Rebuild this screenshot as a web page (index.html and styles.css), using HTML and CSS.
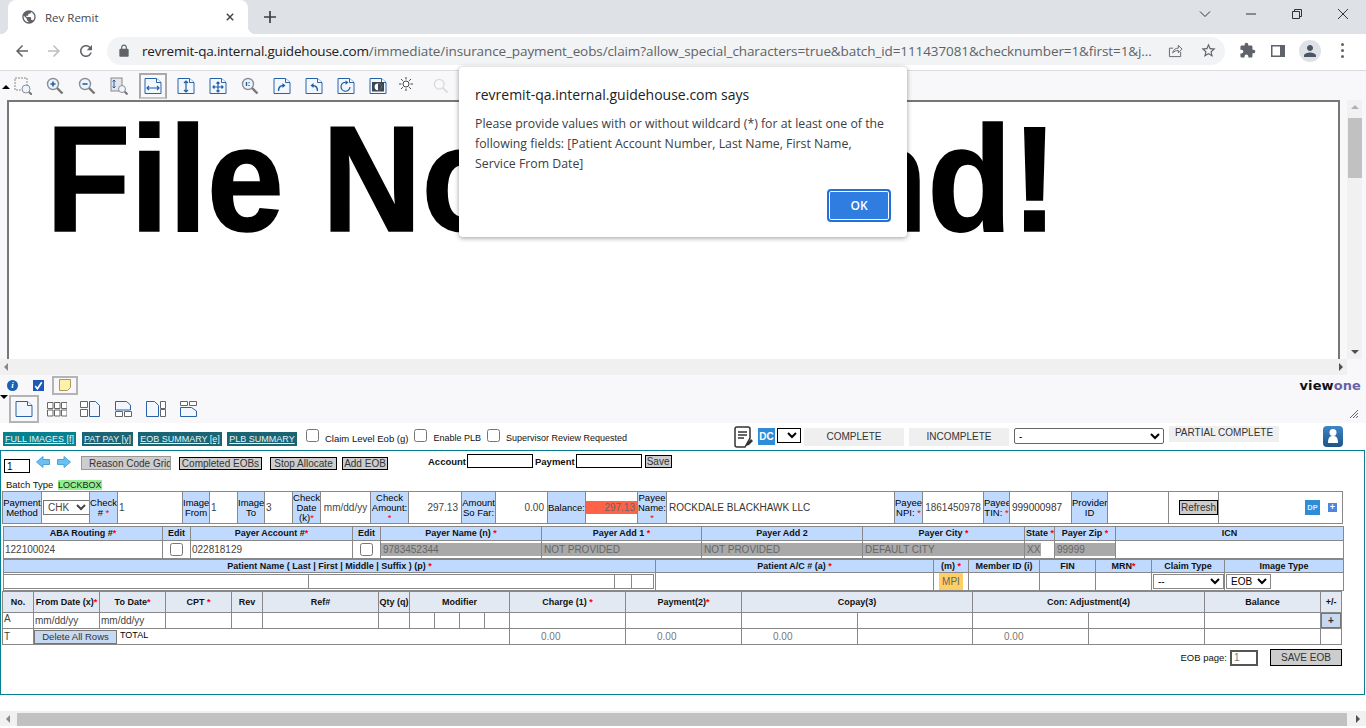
FILE: index.html

```html
<!DOCTYPE html>
<html lang="en">
<head>
  <meta charset="UTF-8" />
  <title>Rev Remit</title>
  <link rel="stylesheet" href="styles.css">
</head>
<body>
<svg class="defs" width="0" height="0">
  <defs>
    <symbol id="page" viewBox="0 0 18 18">
      <path d="M1 1.5h11.5l4.5 4v11H1z" fill="#f2f6fd" stroke="#2a62a8"/>
      <path d="M12.5 1.5v4h4.5" fill="#fff" stroke="#2a62a8"/>
    </symbol>
    <symbol id="lens" viewBox="0 0 18 18">
      <circle cx="7" cy="7" r="5.5" fill="#eef4fb" stroke="#8a9099" stroke-width="1.4"/>
      <path d="M11 11l5.5 5.5" stroke="#777" stroke-width="2.4"/>
    </symbol>
  </defs>
</svg>

<div class="page">
  <div class="tabstrip">
    <div class="tab">
      <svg class="favicon" viewBox="0 0 24 24"><path d="M12 2C6.48 2 2 6.48 2 12s4.48 10 10 10 10-4.48 10-10S17.52 2 12 2zm-1 17.93c-3.95-.49-7-3.85-7-7.93 0-.62.08-1.21.21-1.79L9 15v1c0 1.1.9 2 2 2v1.93zm6.9-2.54c-.26-.81-1-1.39-1.9-1.39h-1v-3c0-.55-.45-1-1-1H8v-2h2c.55 0 1-.45 1-1V7h2c1.1 0 2-.9 2-2v-.41c2.93 1.19 5 4.06 5 7.41 0 2.08-.8 3.97-2.1 5.39z"/></svg>
      <span class="tab-title">Rev Remit</span>
      <svg class="tab-close" viewBox="0 0 10 10"><path d="M1 1l8 8M9 1l-8 8"/></svg>
    </div>
    <svg class="new-tab" viewBox="0 0 12 12"><path d="M6 0v12M0 6h12"/></svg>
    <div class="window-controls">
      <svg viewBox="0 0 12 12" class="win-chevron"><path d="M1 3.5l5 5 5-5"/></svg>
      <svg viewBox="0 0 12 12" class="win-min"><path d="M1 6h10"/></svg>
      <svg viewBox="0 0 12 12" class="win-restore"><path d="M1.5 3.5h7v7h-7zM3.5 3.5v-2h7v7h-2"/></svg>
      <svg viewBox="0 0 12 12" class="win-close"><path d="M1 1l10 10M11 1l-10 10"/></svg>
    </div>
  </div>

  <div class="navbar">
    <svg class="nav-icon" viewBox="0 0 24 24"><path d="M20 11H7.83l5.59-5.59L12 4l-8 8 8 8 1.41-1.41L7.83 13H20v-2z"/></svg>
    <svg class="nav-icon nav-off" viewBox="0 0 24 24"><path d="M12 4l-1.41 1.41L16.17 11H4v2h12.17l-5.58 5.59L12 20l8-8z"/></svg>
    <svg class="nav-icon" viewBox="0 0 24 24"><path d="M17.65 6.35C16.2 4.9 14.21 4 12 4c-4.42 0-7.99 3.58-7.99 8s3.57 8 7.99 8c3.73 0 6.84-2.55 7.73-6h-2.08c-.82 2.33-3.04 4-5.65 4-3.31 0-6-2.69-6-6s2.69-6 6-6c1.66 0 3.14.69 4.22 1.78L13 11h7V4l-2.35 2.35z"/></svg>
    <div class="omnibox">
      <svg class="lock" viewBox="0 0 24 24"><path d="M18 8h-1V6c0-2.76-2.24-5-5-5S7 3.24 7 6v2H6c-1.1 0-2 .9-2 2v10c0 1.1.9 2 2 2h12c1.1 0 2-.9 2-2V10c0-1.1-.9-2-2-2zM9 6c0-1.66 1.34-3 3-3s3 1.34 3 3v2H9V6z"/></svg>
      <span class="url"><b>revremit-qa.internal.guidehouse.com</b>/immediate/insurance_payment_eobs/claim?allow_special_characters=true&amp;batch_id=111437081&amp;checknumber=1&amp;first=1&amp;j...</span>
      <svg class="omni-share" viewBox="0 0 16 16"><path d="M13.5 9.5v5h-12v-9h4M5 10.5c.6-3.4 3-5 6-5V2.5l4 4-4 4V8c-2.500 0-4.500.7-6 2.500z"/></svg>
      <svg class="omni-star" viewBox="0 0 24 24"><path d="M22 9.24l-7.19-.62L12 2 9.19 8.63 2 9.24l5.46 4.73L5.82 21 12 17.27 18.18 21l-1.630-7.030L22 9.240zM12 15.400l-3.760 2.270 1-4.280-3.320-2.880 4.380-.38L12 6.100l1.710 4.040 4.380.38-3.320 2.880 1 4.280L12 15.400z"/></svg>
    </div>
    <svg class="ext-icon" viewBox="0 0 24 24"><path d="M20.500 11H19V7c0-1.100-.9-2-2-2h-4V3.500C13 2.120 11.880 1 10.500 1S8 2.120 8 3.500V5H4c-1.100 0-1.990.9-1.990 2v3.800H3.500c1.490 0 2.700 1.210 2.700 2.700s-1.210 2.700-2.700 2.700H2V20c0 1.100.9 2 2 2h3.800v-1.500c0-1.490 1.210-2.700 2.700-2.700 1.490 0 2.700 1.210 2.700 2.700V22H17c1.100 0 2-.9 2-2v-4h1.500c1.380 0 2.500-1.120 2.500-2.500S21.880 11 20.500 11z"/></svg>
    <svg class="side-icon" viewBox="0 0 14 14"><path d="M0 1h14v12H0zM1.500 2.500v9H9v-9z" fill-rule="evenodd"/></svg>
    <div class="avatar"><svg viewBox="0 0 24 24"><path d="M12 12c2.210 0 4-1.790 4-4s-1.790-4-4-4-4 1.790-4 4 1.790 4 4 4zm0 2c-2.670 0-8 1.340-8 4v2h16v-2c0-2.660-5.330-4-8-4z"/></svg></div>
    <div class="kebab"><i></i><i></i><i></i></div>
  </div>

  <div class="viewer">
    <div class="viewer-tools">
      <span class="caret-up"></span>
      <svg class="vt vt-first" viewBox="0 0 18 18"><rect x="1" y="1" width="12" height="12" fill="none" stroke="#888" stroke-dasharray="2 1"/><circle cx="12" cy="12" r="4" fill="#eef4fb" stroke="#8a9099"/><path d="M15 15l3 3" stroke="#777" stroke-width="2"/></svg>
      <svg class="vt" viewBox="0 0 18 18"><use href="#lens"/><path d="M4.500 7h5M7 4.500v5" stroke="#1f5fa8" stroke-width="1.600"/></svg>
      <svg class="vt" viewBox="0 0 18 18"><use href="#lens"/><path d="M4.500 7h5" stroke="#1f5fa8" stroke-width="1.600"/></svg>
      <svg class="vt" viewBox="0 0 18 18"><rect x="1" y="1" width="11" height="13" fill="#e4e6ea" stroke="#888"/><path d="M4 3v8M2.500 4.500L4 3l1.500 1.500M2.500 9.500L4 11l1.500-1.500" fill="none" stroke="#1f5fa8"/><circle cx="12" cy="12" r="3.500" fill="#eef4fb" stroke="#8a9099"/><path d="M14.500 14.500l3 3" stroke="#777" stroke-width="2"/></svg>
      <span class="vt-selected"><svg class="vt" viewBox="0 0 18 18"><use href="#page"/><path d="M3 11h12M5 9l-2 2 2 2M13 9l2 2-2 2" fill="none" stroke="#1f5fa8" stroke-width="1.200"/></svg></span>
      <svg class="vt" viewBox="0 0 18 18"><use href="#page"/><path d="M9 4v11M7 6l2-2 2 2M7 13l2 2 2-2" fill="none" stroke="#1f5fa8" stroke-width="1.200"/></svg>
      <svg class="vt" viewBox="0 0 18 18"><use href="#page"/><path d="M9 5v10M4 10h10M7.500 6.500L9 5l1.500 1.500M7.500 13.500L9 15l1.500-1.500M5.500 8.500L4 10l1.500 1.500M12.500 8.500L14 10l-1.500 1.500" fill="none" stroke="#1f5fa8" stroke-width="1.200"/></svg>
      <svg class="vt" viewBox="0 0 18 18"><use href="#lens"/><path d="M5.500 5v4" stroke="#1f5fa8" stroke-width="1.400" fill="none"/><path d="M8 5.200v1M8 8v1" stroke="#1f5fa8" stroke-width="1.400"/></svg>
      <svg class="vt" viewBox="0 0 18 18"><use href="#page"/><path d="M5.500 14c0-4 2-5.500 5-5.500" fill="none" stroke="#1f5fa8" stroke-width="1.400"/><path d="M9.500 6l3 2.500-3 2.500z" fill="#1f5fa8"/></svg>
      <svg class="vt" viewBox="0 0 18 18"><use href="#page"/><path d="M12.500 14c0-4-2-5.500-5-5.500" fill="none" stroke="#1f5fa8" stroke-width="1.400"/><path d="M8.500 6l-3 2.500 3 2.500z" fill="#1f5fa8"/></svg>
      <svg class="vt" viewBox="0 0 18 18"><use href="#page"/><path d="M10 5.500a4.500 4.500 0 1 0 3 4.500" fill="none" stroke="#1f5fa8" stroke-width="1.200"/><path d="M8.500 3.500l3 2-3 2.200z" fill="#1f5fa8"/></svg>
      <svg class="vt" viewBox="0 0 18 18"><use href="#page"/><rect x="3" y="5" width="12" height="9.500" fill="#3a4654"/><circle cx="9" cy="9.800" r="3.400" fill="#fff"/><path d="M9 6.400a3.400 3.400 0 0 1 0 6.800z" fill="#3a4654"/></svg>
      <svg class="vt-sun" viewBox="0 0 14 14"><circle cx="7" cy="7" r="3" fill="#fff" stroke="#444"/><path d="M7 0v2.500M7 11.500V14M0 7h2.500M11.500 7H14M2 2l1.800 1.800M10.200 10.200L12 12M12 2l-1.800 1.800M3.800 10.200L2 12" stroke="#444"/></svg>
      <svg class="vt-search" viewBox="0 0 18 18"><circle cx="7" cy="7" r="5.500" fill="none" stroke="#d9dadd" stroke-width="1.400"/><path d="M11 11l5.500 5.500" stroke="#d9dadd" stroke-width="2"/></svg>
    </div>

    <div class="viewer-main">
      <div class="doc-frame">
        <div class="doc-text">File Not Found!</div>
      </div>
      <div class="vscroll">
        <span class="arrow-up"></span>
        <span class="vthumb"></span>
        <span class="arrow-down"></span>
      </div>
    </div>

    <div class="hbar">
      <span class="arrow-left"></span>
      <span class="arrow-right"></span>
    </div>

    <div class="viewer-bottom">
      <div class="vb-row">
        <span class="info-dot">i</span>
        <span class="check-blue"><svg viewBox="0 0 10 10"><path d="M2 5.500l2 2.500 4-6" fill="none" stroke="#fff" stroke-width="1.500"/></svg></span>
        <span class="note-btn"><svg viewBox="0 0 12 12"><path d="M.5.500h11v8l-3 3h-8z" fill="#fdf0a8" stroke="#a89a5c"/></svg></span>
        <span class="logo"><span>view</span><span class="logo-one">one</span></span>
      </div>
      <div class="vb-row vb-pages">
        <span class="caret-down"></span>
        <span class="vb-selected"><svg class="vb-page" viewBox="0 0 18 18"><use href="#page"/></svg></span>
        <svg class="vb-layout" viewBox="0 0 20 16"><path d="M.5 1.500h5.500v6H.5zM7.500 1.500H13v6H7.500zM14.500 1.500H20v6h-5.500zM.5 9h5.500v6H.5zM7.500 9H13v6H7.500zM14.500 9H20v6h-5.500z" fill="#fff" stroke="#666"/></svg>
        <svg class="vb-layout" viewBox="0 0 20 16"><path d="M.5.500h7v6h-7zM.5 8.500h7v7h-7z" fill="#fff" stroke="#666"/><path d="M9.500.500h6l4 4v11h-10z" fill="#f2f6fd" stroke="#2a62a8"/></svg>
        <svg class="vb-layout" viewBox="0 0 20 16"><path d="M2.500.500h11l4 3.500v5h-15z" fill="#f2f6fd" stroke="#2a62a8"/><path d="M2.500 10.500h7v5h-7zM11.500 10.500h7v5h-7z" fill="#fff" stroke="#666"/></svg>
        <svg class="vb-layout" viewBox="0 0 20 16"><path d="M.5.500h8l4 4v11h-12z" fill="#f2f6fd" stroke="#2a62a8"/><path d="M14.500.500h5v7h-5zM14.500 8.500h5v7h-5z" fill="#fff" stroke="#666"/></svg>
        <svg class="vb-layout" viewBox="0 0 20 16"><path d="M1.500.500h7v4h-7zM10.500.500h7v4h-7z" fill="#fff" stroke="#666"/><path d="M1.500 6.500h11l5 3.500v5.500h-16z" fill="#f2f6fd" stroke="#2a62a8"/></svg>
        <svg class="grip" viewBox="0 0 8 8"><path d="M0 8l8-8M3 8l5-5M6 8l2-2" stroke="#666"/></svg>
      </div>
    </div>
  </div>

  <div class="claim-head">
    <a class="teal-tab tab-full">FULL IMAGES [f]</a>
    <a class="teal-tab tab-pat">PAT PAY [y]</a>
    <a class="teal-tab tab-eob">EOB SUMMARY [e]</a>
    <a class="teal-tab tab-plb">PLB SUMMARY</a>
    <label class="check-label lb-claim"><input type="checkbox">Claim Level Eob (g)</label>
    <label class="check-label lb-plb"><input type="checkbox">Enable PLB</label>
    <label class="check-label lb-super"><input type="checkbox">Supervisor Review Requested</label>
    <svg class="doc-pen" viewBox="0 0 20 22"><path d="M4 1h11a2 2 0 0 1 2 2v9l-5 9H4a2 2 0 0 1-2-2V3a2 2 0 0 1 2-2z" fill="#fff" stroke="#333" stroke-width="1.500"/><path d="M5 6h9M5 9h9M5 12h6" stroke="#333" stroke-width="1.500"/><path d="M13 20l1-3 4-4 2 2-4 4z" fill="#333"/></svg>
    <span class="dc-btn">DC</span>
    <select class="dc-select"><option></option></select>
    <span class="status-btn st-complete">COMPLETE</span>
    <span class="status-btn st-incomplete">INCOMPLETE</span>
    <select class="status-select"><option>-</option></select>
    <span class="status-btn st-partial">PARTIAL COMPLETE</span>
    <span class="user-btn"><svg viewBox="0 0 20 20"><circle cx="10" cy="6.500" r="3.500" fill="#fff"/><path d="M5 17c0-6 2-7 5-7s5 1 5 7z" fill="#fff"/></svg></span>
  </div>

  <div class="claim-frame">
    <div class="action-row">
      <input class="mini-input page-no" value="1">
      <svg class="nav-arrow" viewBox="0 0 14 12"><path d="M.5 6L7 .5v3h6.500v5H7v3z" fill="#6cc0f0" stroke="#4aa3dc"/></svg>
      <svg class="nav-arrow nav-next" viewBox="0 0 14 12"><path d="M13.500 6L7 .5v3H.5v5H7v3z" fill="#6cc0f0" stroke="#4aa3dc"/></svg>
      <span class="btn btn-grid"><span>Reason Code Grid</span></span>
      <span class="btn btn-completed">Completed EOBs</span>
      <span class="btn btn-stop">Stop Allocate</span>
      <span class="btn btn-add">Add EOB</span>
      <b class="inline-label label-account">Account</b>
      <input class="mini-input acct-input">
      <b class="inline-label label-payment">Payment</b>
      <input class="mini-input acct-input">
      <span class="btn btn-save">Save</span>
    </div>
    <div class="batch-row">Batch Type <span class="lockbox">LOCKBOX</span></div>

    <table class="grid grid-check">
      <colgroup>
        <col width="39"><col width="48"><col width="28"><col width="65"><col width="27"><col width="28"><col width="27"><col width="28"><col width="28"><col width="50"><col width="38"><col width="53"><col width="34"><col width="52"><col width="38"><col width="52"><col width="29"><col width="228"><col width="28"><col width="61"><col width="26"><col width="62"><col width="36"><col width="61"><col width="50"><col width="124">
      </colgroup>
      <tr>
        <th>Payment Method</th>
        <td class="center"><select class="sel-chk"><option>CHK</option></select></td>
        <th>Check # <em>*</em></th>
        <td>1</td>
        <th>Image From</th>
        <td>1</td>
        <th>Image To</th>
        <td>3</td>
        <th>Check Date (k)<em>*</em></th>
        <td class="center">mm/dd/yy</td>
        <th>Check Amount: <em>*</em></th>
        <td class="right">297.13</td>
        <th>Amount So Far:</th>
        <td class="right">0.00</td>
        <th>Balance:</th>
        <td class="balance-cell"><span class="balance">297.13</span></td>
        <th>Payee Name: <em>*</em></th>
        <td class="payee">ROCKDALE BLACKHAWK LLC</td>
        <th>Payee NPI: <em>*</em></th>
        <td class="center">1861450978</td>
        <th>Payee TIN: <em>*</em></th>
        <td class="payee">999000987</td>
        <th>Provider ID</th>
        <td></td>
        <td class="refresh-cell"><span class="btn btn-refresh">Refresh</span></td>
        <td class="right dp-cell"><span class="dp-btn">DP</span><span class="plus-btn">+</span></td>
      </tr>
    </table>

    <table class="grid grid-payer">
      <colgroup>
        <col width="159"><col width="28"><col width="162"><col width="28"><col width="161"><col width="160"><col width="161"><col width="162"><col width="30"><col width="61"><col width="228">
      </colgroup>
      <tr>
        <th>ABA Routing #<em>*</em></th>
        <th>Edit</th>
        <th>Payer Account #<em>*</em></th>
        <th>Edit</th>
        <th>Payer Name (n) <em>*</em></th>
        <th>Payer Add 1 <em>*</em></th>
        <th>Payer Add 2</th>
        <th>Payer City <em>*</em></th>
        <th>State <em>*</em></th>
        <th>Payer Zip <em>*</em></th>
        <th>ICN</th>
      </tr>
      <tr class="tall">
        <td>122100024</td>
        <td class="center"><input type="checkbox"></td>
        <td>022818129</td>
        <td class="center"><input type="checkbox"></td>
        <td class="lock-cell"><span class="locked">9783452344</span></td>
        <td class="lock-cell"><span class="locked">NOT PROVIDED</span></td>
        <td class="lock-cell"><span class="locked">NOT PROVIDED</span></td>
        <td class="lock-cell"><span class="locked">DEFAULT CITY</span></td>
        <td class="lock-cell"><span class="locked locked-short">XX</span></td>
        <td class="lock-cell"><span class="locked">99999</span></td>
        <td></td>
      </tr>
    </table>

    <table class="grid grid-patient">
      <colgroup>
        <col width="652"><col width="278"><col width="35"><col width="71"><col width="56"><col width="56"><col width="73"><col width="119">
      </colgroup>
      <tr>
        <th>Patient Name ( Last | First | Middle | Suffix ) (p) <em>*</em></th>
        <th>Patient A/C # (a) <em>*</em></th>
        <th>(m) <em>*</em></th>
        <th>Member ID (i)</th>
        <th>FIN</th>
        <th>MRN<em>*</em></th>
        <th>Claim Type</th>
        <th>Image Type</th>
      </tr>
      <tr class="tall">
        <td class="name-cell">
          <div class="name-inputs"><span class="name-a"></span><span class="name-b"></span><span class="name-c"></span><span class="name-d"></span></div>
        </td>
        <td></td>
        <td class="mpi-cell"><span class="mpi">MPI</span></td>
        <td></td>
        <td></td>
        <td></td>
        <td class="center"><select class="sel-claim"><option>--</option></select></td>
        <td><select class="sel-image"><option>EOB</option></select></td>
      </tr>
    </table>

    <table class="grid grid-lines">
      <colgroup>
        <col width="31"><col width="66"><col width="66"><col width="66"><col width="31"><col width="116"><col width="31"><col width="25"><col width="25"><col width="25"><col width="25"><col width="116"><col width="116"><col width="116"><col width="115"><col width="116"><col width="116"><col width="116"><col width="21">
      </colgroup>
      <tr class="head">
        <th>No.</th>
        <th>From Date (x)<em>*</em></th>
        <th>To Date<em>*</em></th>
        <th>CPT <em>*</em></th>
        <th>Rev</th>
        <th>Ref#</th>
        <th>Qty (q)</th>
        <th colspan="4">Modifier</th>
        <th>Charge (1) <em>*</em></th>
        <th>Payment(2)<em>*</em></th>
        <th colspan="2">Copay(3)</th>
        <th colspan="2">Con: Adjustment(4)</th>
        <th>Balance</th>
        <th>+/-</th>
      </tr>
      <tr class="line">
        <td class="top">A</td>
        <td>mm/dd/yy</td>
        <td>mm/dd/yy</td>
        <td></td><td></td><td></td><td></td><td></td><td></td><td></td><td></td>
        <td></td><td></td><td></td><td></td><td></td><td></td><td></td>
        <td class="add-cell"><span class="add-btn">+</span></td>
      </tr>
      <tr class="line">
        <td>T</td>
        <td colspan="10" class="total-cell"><span class="btn-delete">Delete All Rows</span><span class="total-label">TOTAL</span></td>
        <td class="zero">0.00</td>
        <td class="zero">0.00</td>
        <td class="zero">0.00</td>
        <td></td>
        <td class="zero">0.00</td>
        <td></td><td></td><td></td>
      </tr>
    </table>

    <div class="eob-foot">
      <span class="eob-label">EOB page:</span>
      <input class="eob-input" value="1">
      <span class="btn btn-saveeob">SAVE EOB</span>
    </div>
  </div>

  <div class="page-hbar">
    <span class="arrow-left"></span>
    <span class="page-thumb"></span>
    <span class="arrow-right"></span>
  </div>

  <div class="dialog">
    <div class="dialog-title">revremit-qa.internal.guidehouse.com says</div>
    <p class="dialog-text">Please provide values with or without wildcard (*) for at least one of the following fields: [Patient Account Number, Last Name, First Name, Service From Date]</p>
    <div class="dialog-actions"><span class="ok-btn">OK</span></div>
  </div>
</div>
</body>
</html>
```

FILE: styles.css

```css
* {
  box-sizing: border-box;
}
html, body {
  margin: 0;
  padding: 0;
  background: #fff;
  overflow: hidden;
}
body {
  font-family: "Liberation Sans", Arial, sans-serif;
  font-size: 10px;
  color: #222;
}
.defs {
  display: block;
  height: 0;
}
.page {
  position: relative;
  width: 1366px;
  height: 728px;
  overflow: hidden;
}

/* browser tab strip */
.tabstrip {
  display: flex;
  align-items: flex-end;
  height: 34px;
  padding-left: 8px;
  background: #dee1e6;
}
.tab {
  position: relative;
  display: flex;
  align-items: center;
  width: 240px;
  height: 34px;
  padding: 0 13px;
  background: #fff;
  border-radius: 8px 8px 0 0;
}
.tab::before, .tab::after {
  content: "";
  position: absolute;
  bottom: 0;
  width: 8px;
  height: 8px;
}
.tab::before {
  left: -8px;
  background: radial-gradient(circle at 0 0, #dee1e6 8px, #fff 8.5px);
}
.tab::after {
  right: -8px;
  background: radial-gradient(circle at 100% 0, #dee1e6 8px, #fff 8.5px);
}
.favicon {
  width: 16px;
  height: 16px;
  margin-left: 0;
  fill: #5f6368;
}
.tab-title {
  flex: 1;
  margin-left: 8px;
  font: 11.500px "Open Sans", sans-serif;
  color: #45494e;
}
.tab-close {
  width: 8px;
  height: 8px;
  margin-right: 1px;
  fill: none;
  stroke: #444;
  stroke-width: 1.8;
}
.new-tab {
  align-self: center;
  width: 12px;
  height: 12px;
  margin-left: 16px;
  fill: none;
  stroke: #3c4043;
  stroke-width: 1.700;
}
.window-controls {
  display: flex;
  align-items: center;
  align-self: flex-start;
  height: 28px;
  margin-left: auto;
  fill: none;
  stroke: #333;
  stroke-width: 1;
}
.window-controls svg {
  width: 12px;
  height: 12px;
}
.win-chevron, .win-min, .win-restore {
  margin-right: 34px;
}
.win-close {
  margin-right: 17px;
}

/* browser address row */
.navbar {
  display: flex;
  align-items: center;
  height: 37px;
  padding: 0 0 3px 13px;
  background: #fff;
  border-bottom: 1px solid #dcdcdc;
}
.nav-icon {
  width: 18px;
  height: 18px;
  margin-right: 14px;
  fill: #5f6368;
}
.nav-off {
  fill: #bcbec2;
}
.omnibox {
  display: flex;
  align-items: center;
  width: 1118px;
  height: 28px;
  margin-left: -2px;
  padding-left: 10px;
  background: #f1f3f4;
  border-radius: 14px;
}
.lock {
  width: 14px;
  height: 14px;
  fill: #5f6368;
}
.url {
  width: 1016px;
  margin-left: 11px;
  font: 13.500px "Open Sans", sans-serif;
  letter-spacing: -.1px;
  color: #5f6368;
  white-space: nowrap;
  overflow: hidden;
}
.url b {
  font-weight: 400;
  letter-spacing: -.2px;
  color: #202124;
}
.omni-share {
  width: 15px;
  height: 15px;
  margin-left: 10px;
  fill: none;
  stroke: #5f6368;
  stroke-width: 1;
}
.omni-star {
  width: 17px;
  height: 17px;
  margin-left: 17px;
  fill: #5f6368;
}
.ext-icon {
  width: 17px;
  height: 17px;
  margin-left: 14px;
  fill: #5f6368;
}
.side-icon {
  width: 14px;
  height: 14px;
  margin-left: 15px;
  fill: #5f6368;
}
.avatar {
  width: 22px;
  height: 22px;
  margin-left: 14px;
  padding: 2px;
  background: #dee1e6;
  border-radius: 50%;
  fill: #4a5462;
}
.kebab {
  display: flex;
  flex-direction: column;
  gap: 3px;
  margin-left: 20px;
}
.kebab i {
  width: 3px;
  height: 3px;
  background: #5f6368;
  border-radius: 50%;
}

/* document viewer applet */
.viewer {
  height: 352px;
  background: #f8f8fa;
}
.viewer-tools {
  position: relative;
  display: flex;
  align-items: center;
  height: 29px;
  padding-left: 14px;
  gap: 14px;
}
.vt {
  display: block;
  flex: none;
  width: 18px;
  height: 18px;
}
.vt-selected {
  display: flex;
  align-items: center;
  justify-content: center;
  flex: none;
  width: 28px;
  height: 26px;
  margin: 0 -4px 0 -3px;
  border: 2px solid #a9a9a9;
  border-bottom: 2px solid #c8c8c8;
}
.vt-sun {
  width: 14px;
  height: 14px;
  margin-left: -2px;
  margin-top: -4px;
}
.vt-search {
  width: 16px;
  height: 16px;
  margin-left: 6px;
}
.caret-up {
  position: absolute;
  left: 2px;
  top: 14px;
  border: 4px solid transparent;
  border-top: 0;
  border-bottom: 4px solid #000;
}
.viewer-main {
  display: flex;
  height: 259px;
  padding-left: 7px;
}
.doc-frame {
  width: 1333px;
  height: 259px;
  background: #fff;
  border: 2px solid #777;
  border-bottom: 0;
  overflow: hidden;
}
.doc-text {
  margin: 6px 0 0 37px;
  font-size: 138px;
  font-weight: 700;
  line-height: 130px;
  color: #000;
  white-space: nowrap;
  -webkit-text-stroke: 1.500px #000;
  transform: scaleY(1.09);
  transform-origin: 0 0;
}
.vscroll {
  display: flex;
  flex-direction: column;
  align-items: center;
  width: 15px;
  margin-left: 7px;
  background: #f1f1f1;
}
.vthumb {
  width: 14px;
  height: 60px;
  margin-top: 9px;
  background: #c1c1c1;
}
.arrow-up {
  margin-top: 5px;
  border: 4px solid transparent;
  border-top: 0;
  border-bottom: 4px solid #b0b0b0;
}
.arrow-down {
  margin-top: auto;
  margin-bottom: 5px;
  border: 4px solid transparent;
  border-bottom: 0;
  border-top: 4px solid #505050;
}
.hbar {
  display: flex;
  align-items: center;
  justify-content: space-between;
  width: 1347px;
  height: 16px;
  padding: 0 4px;
  background: #f0f0f0;
}
.arrow-left {
  border: 4px solid transparent;
  border-left: 0;
  border-right: 4px solid #888;
}
.arrow-right {
  border: 4px solid transparent;
  border-right: 0;
  border-left: 4px solid #505050;
}
.viewer-bottom {
  height: 48px;
}
.vb-row {
  display: flex;
  align-items: center;
}
.vb-row:first-child {
  height: 20px;
  padding-left: 7px;
}
.info-dot {
  width: 11px;
  height: 11px;
  font: italic 700 9px/11px "Liberation Serif", serif;
  text-align: center;
  color: #fff;
  background: #1a5fb4;
  border-radius: 50%;
}
.check-blue {
  width: 11px;
  height: 11px;
  margin-left: 15px;
  background: #1f57b8;
}
.note-btn {
  display: flex;
  align-items: center;
  justify-content: center;
  width: 26px;
  height: 19px;
  margin-left: 8px;
  border: 2px solid #b4b4b4;
}
.note-btn svg {
  width: 12px;
  height: 12px;
}
.logo {
  margin-left: auto;
  margin-right: 5px;
  font: 700 13px/13px "DejaVu Sans", sans-serif;
  letter-spacing: .1px;
  color: #111;
}
.logo-one {
  color: #6a62a8;
}
.vb-pages {
  position: relative;
  height: 28px;
  padding-left: 9px;
  gap: 13px;
}
.vb-selected {
  display: flex;
  align-items: center;
  justify-content: center;
  width: 30px;
  height: 28px;
  margin-right: -5px;
  border: 2px solid #b4b4b4;
}
.vb-page {
  width: 18px;
  height: 18px;
}
.vb-layout {
  width: 20px;
  height: 16px;
}
.caret-down {
  position: absolute;
  left: 0;
  top: 0;
  border: 4px solid transparent;
  border-bottom: 0;
  border-top: 4px solid #000;
}
.grip {
  position: absolute;
  right: 8px;
  top: 15px;
  width: 8px;
  height: 8px;
}

/* claim form top strip */
.claim-head {
  display: flex;
  align-items: flex-start;
  height: 27px;
}
.teal-tab {
  margin-top: 9px;
  height: 14px;
  font-size: 9px;
  line-height: 14px;
  text-align: center;
  color: #e2f5f9;
  text-decoration: underline;
  white-space: nowrap;
  background: #1a6473;
}
.tab-full {
  width: 73px;
  margin-left: 3px;
  background: #07808f;
}
.tab-pat {
  width: 51px;
  margin-left: 6px;
}
.tab-eob {
  width: 84px;
  margin-left: 5px;
}
.tab-plb {
  width: 70px;
  margin-left: 5px;
}
.check-label {
  display: flex;
  align-items: flex-start;
  height: 23px;
  margin-top: 6px;
  padding-top: 4px;
  font-size: 9px;
  color: #111;
  white-space: nowrap;
}
.check-label input {
  width: 13px;
  height: 13px;
  margin: -4px 6px 0 0;
}
.lb-claim {
  margin-left: 9px;
  font-size: 9.500px;
}
.lb-plb {
  margin-left: 6px;
}
.lb-super {
  margin-left: 6px;
}
.doc-pen {
  width: 20px;
  height: 22px;
  margin-top: 3px;
  margin-left: 106px;
}
.dc-btn {
  width: 17px;
  height: 17px;
  margin-top: 5px;
  margin-left: 5px;
  font-size: 10px;
  font-weight: 700;
  line-height: 17px;
  text-align: center;
  color: #fff;
  background: #2f8dd8;
}
.dc-select {
  width: 24px;
  height: 15px;
  margin-top: 5px;
  margin-left: 2px;
  border: 1px solid #000;
  border-radius: 0;
  background: #fff;
}
.status-btn {
  height: 18px;
  font-size: 10px;
  line-height: 18px;
  text-align: center;
  color: #333;
  background: #efefef;
}
.st-complete {
  width: 100px;
  margin-top: 5px;
  margin-left: 3px;
}
.st-incomplete {
  width: 100px;
  margin-top: 5px;
  margin-left: 5px;
}
.status-select {
  width: 150px;
  height: 16px;
  margin-top: 5px;
  margin-left: 5px;
  font-size: 10px;
  border: 1px solid #666;
  border-radius: 2px;
  background: #fff;
}
.st-partial {
  width: 110px;
  height: 16px;
  margin-top: 3px;
  margin-left: 5px;
  line-height: 14px;
}
.user-btn {
  width: 20px;
  height: 21px;
  margin-top: 3px;
  margin-left: 44px;
  background: linear-gradient(#3f86c6, #1c5488);
  border-radius: 4px;
}
.user-btn svg {
  display: block;
}

/* teal form frame */
.claim-frame {
  height: 245px;
  width: 1365px;
  padding: 0 0 0 1px;
  border: 1px solid #077f93;
}
.action-row {
  position: relative;
  display: flex;
  align-items: flex-start;
  height: 24px;
  padding-left: 2px;
}
.mini-input {
  height: 14px;
  padding: 0 2px;
  font: 10px "Liberation Sans", sans-serif;
  border: 1px solid #000;
  background: #fff;
}
.page-no {
  width: 26px;
  margin-top: 8px;
}
.nav-arrow {
  width: 14px;
  height: 12px;
  margin-top: 5px;
  margin-left: 6px;
}
.nav-next {
  margin-left: 7px;
}
.btn {
  display: inline-block;
  height: 13px;
  font-size: 10px;
  line-height: 11px;
  text-align: center;
  color: #333;
  white-space: nowrap;
  background: #cdcdcd;
  border: 1px solid #000;
}
.btn-grid {
  width: 90px;
  height: 14px;
  margin-top: 5px;
  margin-left: 10px;
  padding-left: 7px;
  text-align: left;
  overflow: hidden;
  border-color: #999;
  line-height: 13px;
}
.btn-completed {
  width: 83px;
  margin-top: 6px;
  margin-left: 8px;
}
.btn-stop {
  width: 67px;
  margin-top: 6px;
  margin-left: 8px;
}
.btn-add {
  width: 46px;
  margin-top: 6px;
  margin-left: 5px;
}
.inline-label {
  margin-top: 5px;
  font-size: 9.500px;
  color: #111;
}
.label-account {
  margin-left: 40px;
}
.label-payment {
  margin-left: 2px;
}
.acct-input {
  width: 66px;
  margin-top: 3px;
  margin-left: 1px;
}
.btn-save {
  width: 27px;
  margin-top: 4px;
  margin-left: 3px;
}
.batch-row {
  height: 15px;
  padding: 5px 0 0 4px;
  font-size: 9.500px;
  line-height: 10px;
  color: #111;
}
.lockbox {
  margin-left: 2px;
  font-size: 9px;
  background: #90ee90;
  color: #222;
}

/* data tables */
.grid {
  table-layout: fixed;
  border-collapse: collapse;
}
.grid th, .grid td {
  padding: 0 1px;
  border: 1px solid #888;
  font-size: 10px;
  line-height: 11px;
  overflow: hidden;
  white-space: nowrap;
}
.grid th {
  font-size: 9px;
  font-weight: 700;
  color: #111;
  text-align: center;
  background: #c0daff;
}
.grid td {
  color: #444;
}
.grid em {
  font-style: normal;
  color: #f00;
}
.center {
  text-align: center;
}
.grid .right {
  padding-right: 3px;
  text-align: right;
}
.top {
  vertical-align: top;
}
.grid-check {
  width: 1340px;
  height: 33px;
  margin-top: 1px;
}
.grid-check th {
  padding: 0;
  font-size: 9.500px;
  font-weight: 400;
  line-height: 10px;
  color: #000;
  white-space: normal;
}
.grid-payer {
  width: 1340px;
  margin-top: 2px;
  margin-left: 1px;
}
.grid-payer tr {
  height: 14px;
}
.grid-payer .tall {
  height: 18px;
}
.grid-patient {
  width: 1340px;
  margin-left: 1px;
}
.grid-patient tr {
  height: 13px;
}
.grid-patient .tall {
  height: 18px;
}
.grid-lines {
  width: 1339px;
}
.grid-lines .head {
  height: 21px;
}
.grid-lines th {
  padding: 0;
  background: #e2e9f3;
}
.grid-lines .line {
  height: 16px;
}
.sel-chk {
  width: 47px;
  height: 15px;
  font-size: 10px;
  background: #fff;
  border: 1px solid #777;
  border-radius: 0;
  color: #444;
}
.grid .balance-cell {
  padding: 0;
}
.balance {
  display: block;
  height: 13px;
  padding-right: 2px;
  line-height: 13px;
  text-align: right;
  color: #666;
  background: #ff6347;
}
.grid .payee {
  padding-left: 2px;
  color: #333;
}
.grid .refresh-cell {
  padding: 0;
  text-align: right;
}
.btn-refresh {
  width: 39px;
  height: 15px;
  line-height: 13px;
}
.grid .dp-cell {
  padding-right: 5px;
}
.dp-btn {
  display: inline-block;
  width: 15px;
  height: 15px;
  font-size: 7.500px;
  font-weight: 700;
  line-height: 15px;
  text-align: center;
  color: #d8ecfb;
  background: #2f8dd8;
  vertical-align: middle;
}
.plus-btn {
  display: inline-block;
  width: 9px;
  height: 9px;
  margin-left: 8px;
  font-size: 9px;
  font-weight: 700;
  line-height: 9px;
  text-align: center;
  color: #fff;
  background: #4d86e0;
  vertical-align: middle;
}
.grid input[type="checkbox"] {
  width: 13px;
  height: 13px;
  margin: 0;
  vertical-align: middle;
}
.grid .lock-cell {
  padding: 0;
}
.locked {
  display: block;
  height: 13px;
  padding-left: 2px;
  line-height: 13px;
  color: #666;
  background: #a9a9a9;
}
.locked-short {
  width: 16px;
}
.grid .name-cell {
  padding: 0;
}
.name-inputs {
  display: flex;
  height: 15px;
}
.name-inputs span {
  border: 1px solid #888;
  border-left-width: 0;
}
.name-a {
  width: 305px;
  border-left-width: 1px;
}
.name-b {
  width: 306px;
}
.name-c {
  width: 17px;
}
.name-d {
  width: 22px;
}
.grid .mpi-cell {
  padding: 0;
}
.mpi {
  display: block;
  width: 24px;
  margin-left: 5px;
  line-height: 17px;
  text-align: center;
  color: #666;
  background: #ffcf66;
}
.sel-claim {
  display: block;
  width: 71px;
  height: 15px;
  margin: 0 auto;
  font-size: 10px;
  border: 1px solid #888;
  border-radius: 0;
  background: #fff;
}
.sel-image {
  display: block;
  width: 45px;
  height: 15px;
  font-size: 10px;
  border: 1px solid #888;
  border-radius: 0;
  background: #fff;
}
.grid .total-cell {
  padding: 0;
}
.btn-delete {
  display: inline-block;
  width: 83px;
  height: 14px;
  margin-top: 1px;
  font-size: 9.500px;
  line-height: 12px;
  text-align: center;
  color: #333;
  background: #c6d9f1;
  border: 1px solid #777;
  vertical-align: top;
}
.total-label {
  margin-left: 3px;
  font-size: 9px;
  color: #000;
}
.grid .zero {
  padding-left: 31px;
  color: #777;
}
.grid .add-cell {
  padding: 0;
}
.add-btn {
  display: block;
  height: 15px;
  font-size: 10px;
  font-weight: 700;
  line-height: 13px;
  text-align: center;
  color: #333;
  background: #c6d9f1;
  border: 1px solid #777;
}
.eob-foot {
  display: flex;
  align-items: center;
  justify-content: flex-end;
  width: 1340px;
  margin-top: 4px;
}
.eob-label {
  margin-right: 3px;
  font-size: 9.500px;
  color: #111;
}
.eob-input {
  width: 28px;
  height: 16px;
  padding: 0 2px;
  font: 10px "Liberation Sans", sans-serif;
  color: #777;
  border: 2px solid #555;
}
.btn-saveeob {
  width: 72px;
  height: 17px;
  margin-left: 12px;
  line-height: 15px;
}

/* page horizontal scrollbar */
.page-hbar {
  display: flex;
  align-items: center;
  height: 15px;
  margin-top: 16px;
  padding: 0 6px;
  background: #f1f1f1;
}
.page-thumb {
  width: 1330px;
  height: 13px;
  margin: 2px 9px 0 7px;
  background: #c1c1c1;
}

/* alert dialog */
.dialog {
  position: absolute;
  left: 459px;
  top: 67px;
  width: 448px;
  height: 170px;
  padding: 19px 16px 0;
  background: #fff;
  border-radius: 4px;
  box-shadow: 0 1px 5px rgba(0, 0, 0, .4);
  font-family: "Open Sans", sans-serif;
}
.dialog-title {
  font-size: 14px;
  line-height: 18px;
  color: #202124;
}
.dialog-text {
  margin: 10px 0 0;
  font-size: 12.300px;
  line-height: 20px;
  color: #3c4043;
}
.dialog-actions {
  display: flex;
  justify-content: flex-end;
  margin-top: 15px;
}
.ok-btn {
  width: 64px;
  height: 33px;
  font-size: 12px;
  font-weight: 600;
  line-height: 29px;
  text-align: center;
  color: #fff;
  background: #2f7de1;
  border: 2px solid #2470d8;
  box-shadow: inset 0 0 0 1px #fff;
  border-radius: 4px;
}
```
